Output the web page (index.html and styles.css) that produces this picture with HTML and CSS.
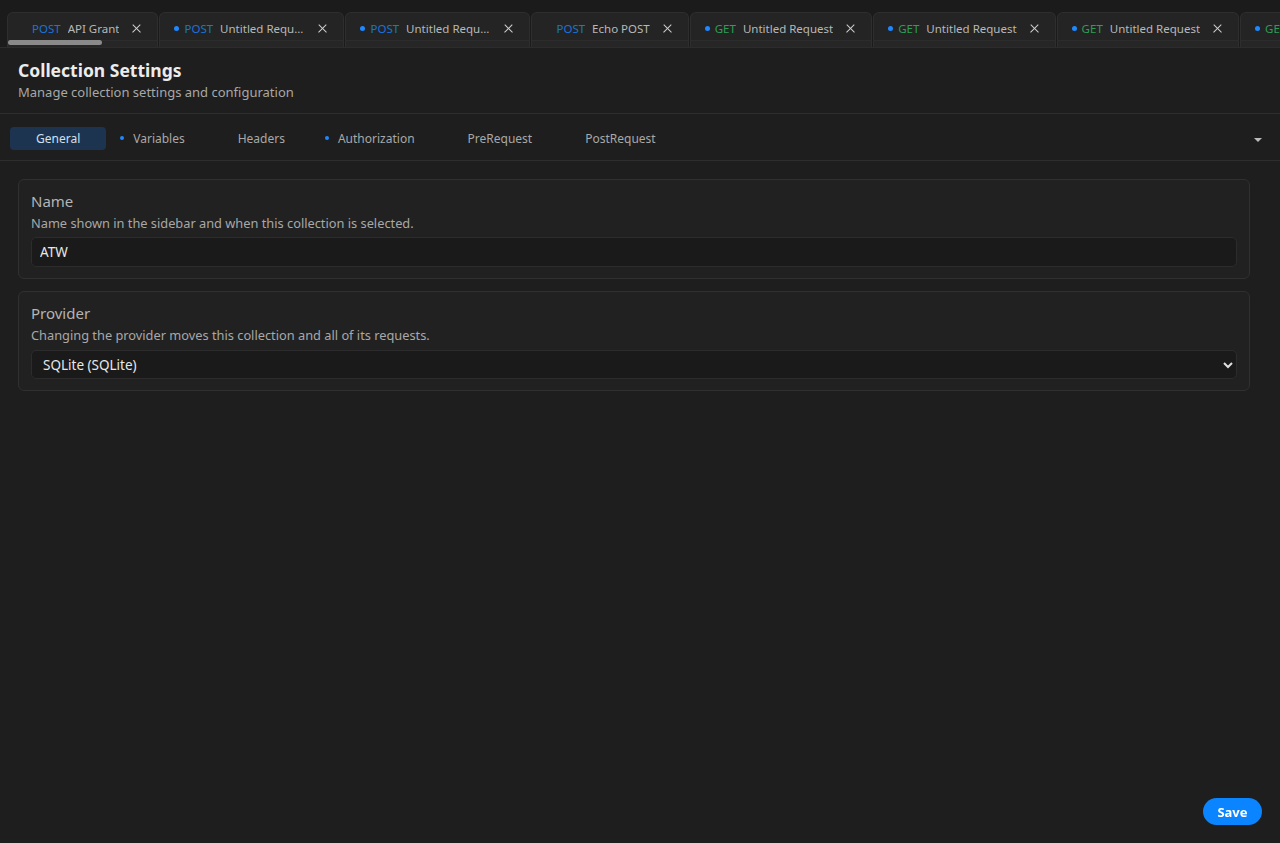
FILE: index.html
```html
<!DOCTYPE html>
<html lang="en">
<head>
    <meta charset="UTF-8">
    <meta name="viewport" content="width=device-width, initial-scale=1.0">
    <title>Collection Settings</title>
    <link rel="stylesheet" href="styles.css">
</head>
<body>
    <div class="tabbar">
        <div class="tab">
            <span class="dot hidden"></span><span class="method post">POST</span><span class="tab-name">API Grant</span><span class="close"></span>
        </div>
        <div class="tab">
            <span class="dot"></span><span class="method post">POST</span><span class="tab-name">Untitled Request</span><span class="close"></span>
        </div>
        <div class="tab">
            <span class="dot"></span><span class="method post">POST</span><span class="tab-name">Untitled Request</span><span class="close"></span>
        </div>
        <div class="tab">
            <span class="dot hidden"></span><span class="method post">POST</span><span class="tab-name">Echo POST</span><span class="close"></span>
        </div>
        <div class="tab">
            <span class="dot"></span><span class="method get">GET</span><span class="tab-name">Untitled Request</span><span class="close"></span>
        </div>
        <div class="tab">
            <span class="dot"></span><span class="method get">GET</span><span class="tab-name">Untitled Request</span><span class="close"></span>
        </div>
        <div class="tab">
            <span class="dot"></span><span class="method get">GET</span><span class="tab-name">Untitled Request</span><span class="close"></span>
        </div>
        <div class="tab">
            <span class="dot"></span><span class="method get">GET</span><span class="tab-name">Untitled Request</span><span class="close"></span>
        </div>
        <div class="scroll-thumb"></div>
    </div>

    <div class="header">
        <h1>Collection Settings</h1>
        <p>Manage collection settings and configuration</p>
    </div>

    <div class="nav">
        <div class="nav-item active">General</div>
        <div class="nav-item marked">Variables</div>
        <div class="nav-item">Headers</div>
        <div class="nav-item marked">Authorization</div>
        <div class="nav-item">PreRequest</div>
        <div class="nav-item">PostRequest</div>
        <div class="nav-caret"></div>
    </div>

    <div class="content">
        <div class="card">
            <div class="card-title">Name</div>
            <div class="card-desc">Name shown in the sidebar and when this collection is selected.</div>
            <input class="field" type="text" value="ATW">
        </div>
        <div class="card">
            <div class="card-title">Provider</div>
            <div class="card-desc">Changing the provider moves this collection and all of its requests.</div>
            <div class="select-wrap">
                <select class="field">
                    <option>SQLite (SQLite)</option>
                </select>
                <svg class="chev" width="10" height="8" viewBox="0 0 10 8"><path d="M1 2 L5 6 L9 2" fill="none" stroke="#e0e0e0" stroke-width="2"/></svg>
            </div>
        </div>
    </div>

    <button class="save">Save</button>
</body>
</html>
```

FILE: styles.css
```css
* {
    box-sizing: border-box;
}
body {
    margin: 0;
    height: 843px;
    overflow: hidden;
    background-color: #1e1e1e;
    color: #cccccc;
    font-family: "Noto Sans", sans-serif;
    font-size: 14px;
}
.tabbar {
    position: relative;
    display: flex;
    gap: 1px;
    padding: 12px 0 0 7px;
    height: 48px;
    background: #1b1b1b;
    border-bottom: 1px solid #2c2c2c;
    overflow: hidden;
}
.tab {
    flex: none;
    display: flex;
    align-items: center;
    max-width: 185px;
    height: 36px;
    padding: 0 16px 4px 14px;
    background: #242424;
    border: 1px solid #2e2e2e;
    border-bottom: none;
    border-radius: 6px 6px 0 0;
    font-size: 11.5px;
    box-shadow: inset 0 -7px 0 #262626, inset 0 -8px 0 #2c2c2c;
}
.dot {
    flex: none;
    width: 5px;
    height: 5px;
    border-radius: 50%;
    background: #1e88ff;
    margin-right: 5px;
}
.dot.hidden {
    visibility: hidden;
}
.method {
    flex: none;
    margin-right: 7px;
}
.post {
    color: #1a73d9;
}
.get {
    color: #2e9e55;
}
.tab-name {
    min-width: 0;
    color: #b8b8b8;
    white-space: nowrap;
    overflow: hidden;
    text-overflow: ellipsis;
}
.close {
    flex: none;
    position: relative;
    width: 9px;
    height: 9px;
    margin-left: 13px;
}
.close::before,
.close::after {
    content: "";
    position: absolute;
    left: -1px;
    top: 4px;
    width: 11px;
    height: 1.3px;
    background: #cfcfcf;
    transform: rotate(45deg);
}
.close::after {
    transform: rotate(-45deg);
}
.scroll-thumb {
    position: absolute;
    left: 8px;
    top: 40px;
    width: 94px;
    height: 5px;
    border-radius: 3px;
    background: #8a8a8a;
}
.header {
    padding: 10px 18px 11px;
    border-bottom: 1px solid #2e2e2e;
}
.header h1 {
    margin: 0;
    font-size: 17.5px;
    font-weight: bold;
    color: #ececec;
    line-height: 24px;
}
.header p {
    margin: 0;
    font-size: 13px;
    color: #a8a8a8;
    line-height: 20px;
}
.nav {
    position: relative;
    display: flex;
    gap: 1px;
    padding: 13px 10px 10px;
    border-bottom: 1px solid #2e2e2e;
}
.nav-item {
    position: relative;
    padding: 0 26px;
    height: 23px;
    line-height: 23px;
    border-radius: 4px;
    font-size: 12px;
    color: #a8a8a8;
}
.nav-item.active {
    background: #1c3450;
    color: #d2e0ee;
}
.nav-item.marked::before {
    content: "";
    position: absolute;
    left: 13px;
    top: 9px;
    width: 4px;
    height: 4px;
    border-radius: 50%;
    background: #1e88ff;
}
.nav-caret {
    position: absolute;
    right: 18px;
    top: 24px;
    width: 0;
    height: 0;
    border-left: 4px solid transparent;
    border-right: 4px solid transparent;
    border-top: 4px solid #bbbbbb;
}
.content {
    display: flex;
    flex-direction: column;
    gap: 12px;
    padding: 18px 30px 0 18px;
}
.card {
    padding: 10px 12px 11px 12px;
    background: #212121;
    border: 1px solid #303030;
    border-radius: 6px;
}
.card-title {
    font-size: 15px;
    color: #b4b4b4;
    line-height: 22px;
}
.card-desc {
    font-size: 12.8px;
    color: #a8a8a8;
    line-height: 22px;
}
.field {
    display: block;
    width: 100%;
    height: 30px;
    margin-top: 3px;
    padding: 0 8px;
    background: #1a1a1a;
    border: 1px solid #2c2c2c;
    border-radius: 5px;
    color: #e8e8e8;
    font-family: inherit;
    font-size: 13.5px;
    outline: none;
}
.select-wrap {
    position: relative;
    margin-top: 4px;
}
select.field {
    appearance: none;
    height: 29px;
    margin-top: 0;
    padding-left: 11px;
}
.chev {
    position: absolute;
    right: 4px;
    top: 11px;
}
.save {
    position: fixed;
    right: 18px;
    bottom: 18px;
    width: 59px;
    height: 27px;
    border: none;
    border-radius: 14px;
    background: #0a84ff;
    color: #ffffff;
    font-family: inherit;
    font-size: 13px;
    font-weight: bold;
}
```
